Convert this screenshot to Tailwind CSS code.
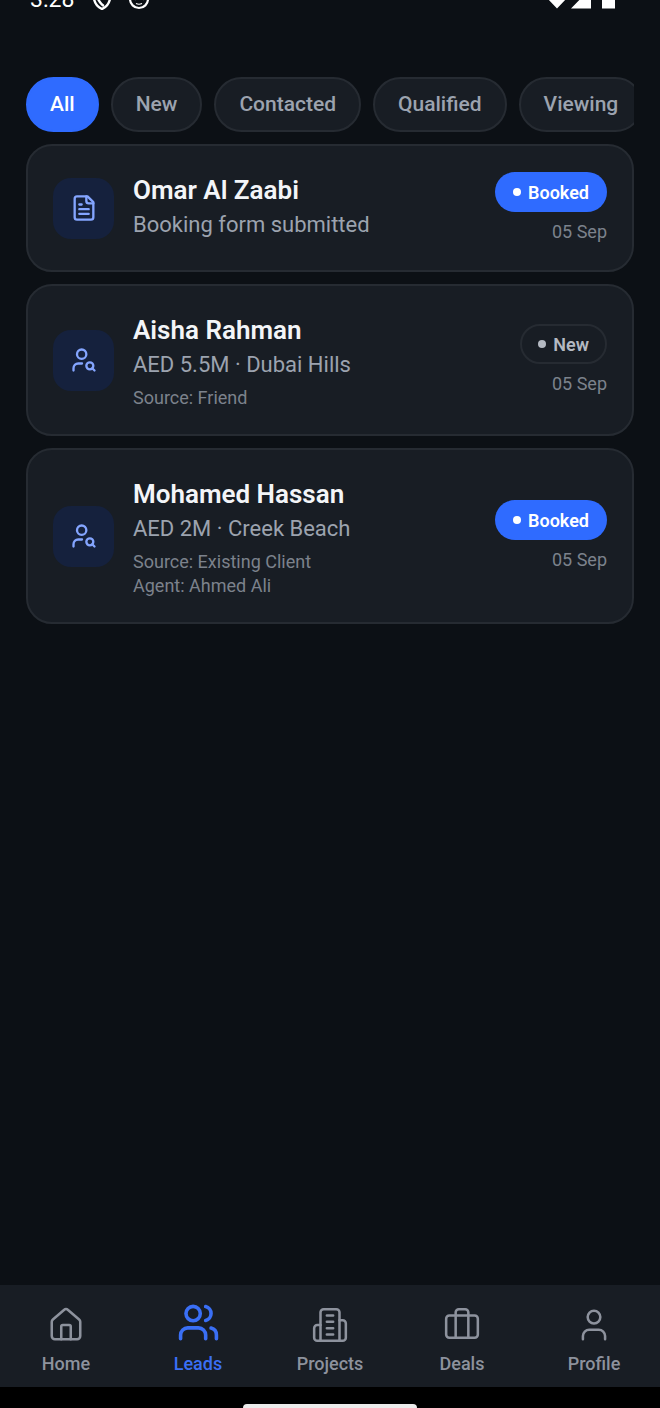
<!DOCTYPE html>
<html lang="en">
<head>
<meta charset="utf-8">
<meta name="viewport" content="width=device-width, initial-scale=1">
<title>Leads</title>
<script src="https://cdn.jsdelivr.net/npm/@tailwindcss/browser@4"></script>
</head>
<body class="flex min-h-screen flex-col bg-[#0c1015] font-['Roboto',sans-serif] text-[#9ca3af]">

<!-- Symbols shared by the list -->
<svg class="hidden" aria-hidden="true">
  <symbol id="user-search" viewBox="0 0 24 24"><circle cx="10" cy="7" r="4"/><path d="M10.3 15H7a4 4 0 0 0-4 4v2"/><circle cx="17" cy="17" r="3"/><path d="m21 21-1.9-1.9"/></symbol>
</svg>

<!-- Status bar, scrolled partly out of view -->
<div class="flex h-3 items-end justify-between overflow-hidden pr-11 pb-0.5 pl-[30px] text-white">
  <div class="flex items-end gap-[18px]">
    <span class="text-[23px] leading-5">3:28</span>
    <svg class="h-6 w-5" viewBox="0 0 20 24" fill="none" stroke="currentColor" stroke-width="2.400"><path d="M10 2 2 5v8c1 4.500 4.500 8.500 8 10 3.500-1.500 7-5.500 8-10V5z"/><path d="M2 9c4 1 5 9 10 11"/></svg>
    <svg class="-ml-0.5 h-6 w-[22px]" viewBox="0 0 22 24" fill="none" stroke="currentColor" stroke-width="2.200"><circle cx="11" cy="13" r="9"/><path stroke-width="1.200" d="M7 14.500h.1M15 14.500h.1M8 17.500c2 1 4 1 6 0"/></svg>
  </div>
  <svg class="h-3 w-[70px]" viewBox="0 0 70 12" fill="currentColor"><path d="M1 0h20L11 10.500zM25 10.500 45-10V10.500zM56-12h13V10.500H56z"/></svg>
</div>

<main class="flex flex-1 flex-col gap-3 px-[26px] pt-[65px]">
  <div class="flex gap-3 overflow-hidden text-[21px] leading-[51px] font-medium whitespace-nowrap" role="group" aria-label="Filter by stage">
    <button class="shrink-0 rounded-full border-2 border-[#2f6bff] bg-[#2f6bff] px-[22px] text-white">All</button>
    <button class="shrink-0 rounded-full border-2 border-[#262b32] bg-[#181d24] px-[23px]">New</button>
    <button class="shrink-0 rounded-full border-2 border-[#262b32] bg-[#181d24] px-[23px]">Contacted</button>
    <button class="shrink-0 rounded-full border-2 border-[#262b32] bg-[#181d24] px-[23px]">Qualified</button>
    <button class="shrink-0 rounded-full border-2 border-[#262b32] bg-[#181d24] px-[23px]">Viewing</button>
  </div>

  <article class="flex items-center gap-[19px] rounded-[26px] border-2 border-[#262b32] bg-[#181d24] px-[25px] py-6">
    <div class="flex size-[61px] shrink-0 items-center justify-center rounded-[18px] bg-[#15213d]">
      <svg class="size-7 text-[#84a5ff]" viewBox="0 0 24 24" fill="none" stroke="currentColor" stroke-width="2" stroke-linecap="round" stroke-linejoin="round"><path d="M15 2H6a2 2 0 0 0-2 2v16a2 2 0 0 0 2 2h12a2 2 0 0 0 2-2V7Z"/><path d="M14 2v4a2 2 0 0 0 2 2h4"/><path d="M10 9H8M16 13H8M16 17H8"/></svg>
    </div>
    <div class="min-w-0 flex-1">
      <h2 class="text-[26px] leading-10 font-semibold text-[#f3f5f8]">Omar Al Zaabi</h2>
      <p class="mb-1.5 text-[22px] leading-[30px]">Booking form submitted</p>
    </div>
    <div class="flex shrink-0 flex-col items-end gap-2">
      <span class="flex h-10 items-center gap-[7px] rounded-full bg-[#2f6bff] px-[18px] text-[18px] font-semibold text-white"><i class="size-2 rounded-full bg-current"></i>Booked</span>
      <time class="text-[18px] leading-6 text-[#7c828c]">05 Sep</time>
    </div>
  </article>

  <article class="flex items-center gap-[19px] rounded-[26px] border-2 border-[#262b32] bg-[#181d24] px-[25px] py-6">
    <div class="flex size-[61px] shrink-0 items-center justify-center rounded-[18px] bg-[#15213d]">
      <svg class="size-7 text-[#84a5ff]" fill="none" stroke="currentColor" stroke-width="2" stroke-linecap="round" stroke-linejoin="round"><use href="#user-search"/></svg>
    </div>
    <div class="min-w-0 flex-1">
      <h2 class="text-[26px] leading-10 font-semibold text-[#f3f5f8]">Aisha Rahman</h2>
      <p class="mb-1.5 text-[22px] leading-[30px]">AED 5.5M · Dubai Hills</p>
      <p class="text-[18px] leading-6 text-[#7c828c]">Source: Friend</p>
    </div>
    <div class="flex shrink-0 flex-col items-end gap-2">
      <span class="flex h-10 items-center gap-[7px] rounded-full border-2 border-[#262b32] px-4 text-[18px] font-semibold text-[#b4b9c2]"><i class="size-2 rounded-full bg-current"></i>New</span>
      <time class="text-[18px] leading-6 text-[#7c828c]">05 Sep</time>
    </div>
  </article>

  <article class="flex items-center gap-[19px] rounded-[26px] border-2 border-[#262b32] bg-[#181d24] px-[25px] py-6">
    <div class="flex size-[61px] shrink-0 items-center justify-center rounded-[18px] bg-[#15213d]">
      <svg class="size-7 text-[#84a5ff]" fill="none" stroke="currentColor" stroke-width="2" stroke-linecap="round" stroke-linejoin="round"><use href="#user-search"/></svg>
    </div>
    <div class="min-w-0 flex-1">
      <h2 class="text-[26px] leading-10 font-semibold text-[#f3f5f8]">Mohamed Hassan</h2>
      <p class="mb-1.5 text-[22px] leading-[30px]">AED 2M · Creek Beach</p>
      <p class="text-[18px] leading-6 text-[#7c828c]">Source: Existing Client</p>
      <p class="text-[18px] leading-6 text-[#7c828c]">Agent: Ahmed Ali</p>
    </div>
    <div class="flex shrink-0 flex-col items-end gap-2">
      <span class="flex h-10 items-center gap-[7px] rounded-full bg-[#2f6bff] px-[18px] text-[18px] font-semibold text-white"><i class="size-2 rounded-full bg-current"></i>Booked</span>
      <time class="text-[18px] leading-6 text-[#7c828c]">05 Sep</time>
    </div>
  </article>
</main>

<nav class="grid grid-cols-5 bg-[#181d24] pt-4 pb-[11px] text-[18px] leading-6 font-medium text-[#8d929d]" aria-label="Main">
  <a href="#home" class="flex flex-col items-center gap-[3px]">
    <span class="flex h-12 items-center"><svg class="size-[38px]" viewBox="0 0 24 24" fill="none" stroke="currentColor" stroke-width="1.600" stroke-linecap="round" stroke-linejoin="round"><path d="M15 21v-8a1 1 0 0 0-1-1h-4a1 1 0 0 0-1 1v8"/><path d="M3 10a2 2 0 0 1 .709-1.528l7-6a2 2 0 0 1 2.582 0l7 6A2 2 0 0 1 21 10v9a2 2 0 0 1-2 2H5a2 2 0 0 1-2-2z"/></svg></span>Home</a>
  <a href="#leads" class="flex flex-col items-center gap-[3px] text-[#3a6ff5]" aria-current="page">
    <span class="flex h-12 items-start"><svg class="size-[43px]" viewBox="0 0 24 24" fill="none" stroke="currentColor" stroke-width="2" stroke-linecap="round" stroke-linejoin="round"><path d="M16 21v-2a4 4 0 0 0-4-4H6a4 4 0 0 0-4 4v2"/><circle cx="9" cy="7" r="4"/><path d="M22 21v-2a4 4 0 0 0-3-3.870M16 3.130a4 4 0 0 1 0 7.750"/></svg></span>Leads</a>
  <a href="#projects" class="flex flex-col items-center gap-[3px]">
    <span class="flex h-12 items-center"><svg class="size-[38px]" viewBox="0 0 24 24" fill="none" stroke="currentColor" stroke-width="1.600" stroke-linecap="round" stroke-linejoin="round"><path d="M6 22V4a2 2 0 0 1 2-2h8a2 2 0 0 1 2 2v18Z"/><path d="M6 12H4a2 2 0 0 0-2 2v6a2 2 0 0 0 2 2h2M18 9h2a2 2 0 0 1 2 2v9a2 2 0 0 1-2 2h-2M10 6h4M10 10h4M10 14h4M10 18h4"/></svg></span>Projects</a>
  <a href="#deals" class="flex flex-col items-center gap-[3px]">
    <span class="flex h-12 items-center"><svg class="size-[38px]" viewBox="0 0 24 24" fill="none" stroke="currentColor" stroke-width="1.600" stroke-linecap="round" stroke-linejoin="round"><path d="M16 20V4a2 2 0 0 0-2-2h-4a2 2 0 0 0-2 2v16"/><rect width="20" height="14" x="2" y="6" rx="2"/></svg></span>Deals</a>
  <a href="#profile" class="flex flex-col items-center gap-[3px]">
    <span class="flex h-12 items-center"><svg class="size-[38px]" viewBox="0 0 24 24" fill="none" stroke="currentColor" stroke-width="1.600" stroke-linecap="round" stroke-linejoin="round"><path d="M19 21v-2a4 4 0 0 0-4-4H9a4 4 0 0 0-4 4v2"/><circle cx="12" cy="7" r="4"/></svg></span>Profile</a>
</nav>

<!-- System gesture bar -->
<div class="flex h-[21px] items-end justify-center bg-black">
  <div class="h-1 w-[174px] rounded-t-sm bg-[#ececec]"></div>
</div>
</body>
</html>
